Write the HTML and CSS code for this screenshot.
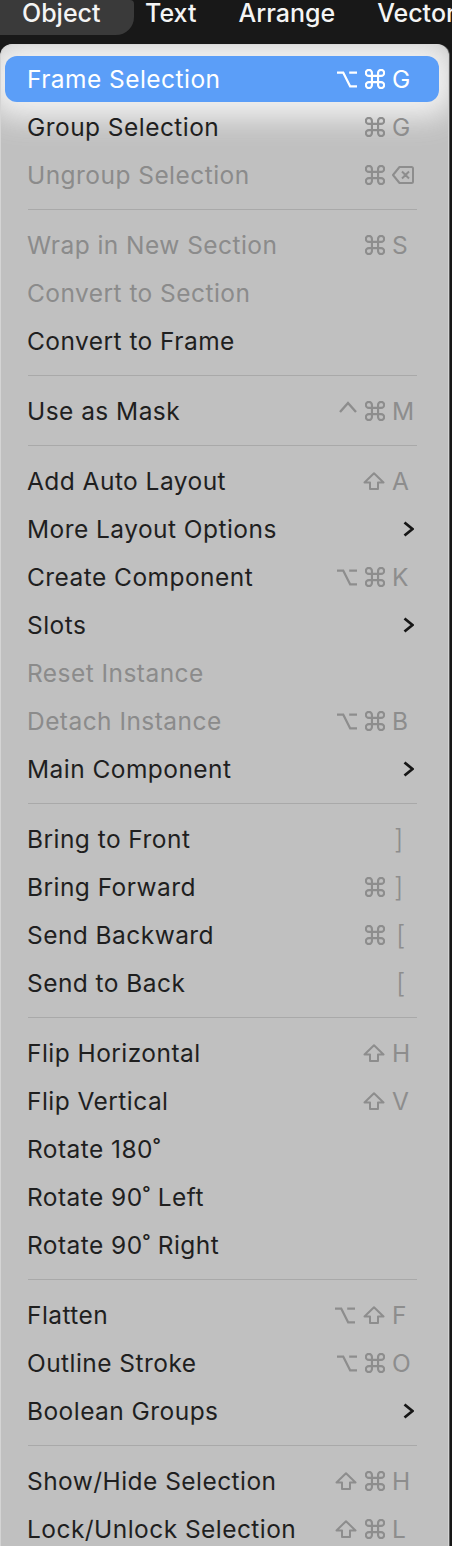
FILE: index.html
```html
<!DOCTYPE html>
<html>
<head>
<meta charset="utf-8">
<link rel="stylesheet" href="styles.css">
</head>
<body>
<svg width="0" height="0" class="defs">
  <defs>
    <symbol id="cmd" viewBox="2.2 2.2 19.6 19.6"><path d="M15 6v12a3 3 0 1 0 3-3H6a3 3 0 1 0 3 3V6a3 3 0 1 0-3 3h12a3 3 0 1 0-3-3"/></symbol>
    <symbol id="opt" viewBox="0 0 20 17"><path d="M0 1.6h6.2l7 13.8H20M12.2 1.6H20"/></symbol>
    <symbol id="shift" viewBox="0 0 22 18"><path d="M7 17v-6.5H1.5L11 1.2l9.5 9.3H15V17z"/></symbol>
    <symbol id="ctrl" viewBox="0 0 18 12"><path d="M1 11L9 2l8 9"/></symbol>
    <symbol id="del" viewBox="0 0 22 18"><path d="M19.5 1H7.5L1 9l6.5 8h12a1.5 1.5 0 0 0 1.5-1.5v-13A1.5 1.5 0 0 0 19.5 1zM10 5.5l7 7M17 5.5l-7 7"/></symbol>
    <symbol id="chev" viewBox="0 0 11 16"><path d="M1.5 1.5l8 6.5-8 6.5"/></symbol>
  </defs>
</svg>

<div class="topbar">
  <div class="tab active">Object</div>
  <div class="tab">Text</div>
  <div class="tab">Arrange</div>
  <div class="tab">Vector</div>
</div>

<div class="menu">
  <div class="row hl">
    <span class="label">Frame Selection</span>
    <span class="keys"><span class="mods"><svg class="i opt"><use href="#opt"/></svg><svg class="i cmd"><use href="#cmd"/></svg></span><span class="key">G</span></span>
  </div>
  <div class="row">
    <span class="label">Group Selection</span>
    <span class="keys"><span class="mods"><svg class="i cmd"><use href="#cmd"/></svg></span><span class="key">G</span></span>
  </div>
  <div class="row off">
    <span class="label">Ungroup Selection</span>
    <span class="keys"><span class="mods"><svg class="i cmd"><use href="#cmd"/></svg></span><span class="key"><svg class="i del"><use href="#del"/></svg></span></span>
  </div>
  <div class="sep"></div>
  <div class="row off">
    <span class="label">Wrap in New Section</span>
    <span class="keys"><span class="mods"><svg class="i cmd"><use href="#cmd"/></svg></span><span class="key">S</span></span>
  </div>
  <div class="row off">
    <span class="label">Convert to Section</span>
  </div>
  <div class="row">
    <span class="label">Convert to Frame</span>
  </div>
  <div class="sep"></div>
  <div class="row">
    <span class="label">Use as Mask</span>
    <span class="keys"><span class="mods"><svg class="i ctrl"><use href="#ctrl"/></svg><svg class="i cmd"><use href="#cmd"/></svg></span><span class="key">M</span></span>
  </div>
  <div class="sep"></div>
  <div class="row">
    <span class="label">Add Auto Layout</span>
    <span class="keys"><span class="mods"><svg class="i shift"><use href="#shift"/></svg></span><span class="key">A</span></span>
  </div>
  <div class="row">
    <span class="label">More Layout Options</span>
    <svg class="chev"><use href="#chev"/></svg>
  </div>
  <div class="row">
    <span class="label">Create Component</span>
    <span class="keys"><span class="mods"><svg class="i opt"><use href="#opt"/></svg><svg class="i cmd"><use href="#cmd"/></svg></span><span class="key">K</span></span>
  </div>
  <div class="row">
    <span class="label">Slots</span>
    <svg class="chev"><use href="#chev"/></svg>
  </div>
  <div class="row off">
    <span class="label">Reset Instance</span>
  </div>
  <div class="row off">
    <span class="label">Detach Instance</span>
    <span class="keys"><span class="mods"><svg class="i opt"><use href="#opt"/></svg><svg class="i cmd"><use href="#cmd"/></svg></span><span class="key">B</span></span>
  </div>
  <div class="row">
    <span class="label">Main Component</span>
    <svg class="chev"><use href="#chev"/></svg>
  </div>
  <div class="sep"></div>
  <div class="row">
    <span class="label">Bring to Front</span>
    <span class="keys"><span class="mods"></span><span class="key br">]</span></span>
  </div>
  <div class="row">
    <span class="label">Bring Forward</span>
    <span class="keys"><span class="mods"><svg class="i cmd"><use href="#cmd"/></svg></span><span class="key br">]</span></span>
  </div>
  <div class="row">
    <span class="label">Send Backward</span>
    <span class="keys"><span class="mods"><svg class="i cmd"><use href="#cmd"/></svg></span><span class="key br bl">[</span></span>
  </div>
  <div class="row">
    <span class="label">Send to Back</span>
    <span class="keys"><span class="mods"></span><span class="key br bl">[</span></span>
  </div>
  <div class="sep"></div>
  <div class="row">
    <span class="label">Flip Horizontal</span>
    <span class="keys"><span class="mods"><svg class="i shift"><use href="#shift"/></svg></span><span class="key">H</span></span>
  </div>
  <div class="row">
    <span class="label">Flip Vertical</span>
    <span class="keys"><span class="mods"><svg class="i shift"><use href="#shift"/></svg></span><span class="key">V</span></span>
  </div>
  <div class="row">
    <span class="label">Rotate 180˚</span>
  </div>
  <div class="row">
    <span class="label">Rotate 90˚ Left</span>
  </div>
  <div class="row">
    <span class="label">Rotate 90˚ Right</span>
  </div>
  <div class="sep"></div>
  <div class="row">
    <span class="label">Flatten</span>
    <span class="keys"><span class="mods"><svg class="i opt"><use href="#opt"/></svg><svg class="i shift"><use href="#shift"/></svg></span><span class="key">F</span></span>
  </div>
  <div class="row">
    <span class="label">Outline Stroke</span>
    <span class="keys"><span class="mods"><svg class="i opt"><use href="#opt"/></svg><svg class="i cmd"><use href="#cmd"/></svg></span><span class="key">O</span></span>
  </div>
  <div class="row">
    <span class="label">Boolean Groups</span>
    <svg class="chev"><use href="#chev"/></svg>
  </div>
  <div class="sep"></div>
  <div class="row">
    <span class="label">Show/Hide Selection</span>
    <span class="keys"><span class="mods"><svg class="i shift"><use href="#shift"/></svg><svg class="i cmd"><use href="#cmd"/></svg></span><span class="key">H</span></span>
  </div>
  <div class="row">
    <span class="label">Lock/Unlock Selection</span>
    <span class="keys"><span class="mods"><svg class="i shift"><use href="#shift"/></svg><svg class="i cmd"><use href="#cmd"/></svg></span><span class="key">L</span></span>
  </div>
</div>
</body>
</html>
```

FILE: styles.css
```css
* { box-sizing: border-box; }

html, body {
  margin: 0;
  padding: 0;
  background: #171717;
  overflow: hidden;
}

body {
  width: 452px;
  height: 1546px;
  font-family: Inter, "Noto Sans", "Liberation Sans", sans-serif;
}

.defs { position: absolute; width: 0; height: 0; }

.topbar {
  height: 44px;
  display: flex;
  align-items: flex-start;
  background: #181818;
  white-space: nowrap;
  overflow: hidden;
}

.tab {
  height: 35px;
  padding: 1px 21px 0;
  line-height: 25px;
  color: #f4f4f4;
  font-size: 25px;
  font-weight: 500;
}

.tab.active {
  background: #3a3a3a;
  border-radius: 0 4px 18px 0;
  margin-left: -12px;
  padding-left: 34px;
  padding-right: 33.5px;
  margin-right: -10px;
}

.menu {
  width: 449px;
  height: 1502px;
  background: #c0c0c0;
  border-radius: 12px 12px 0 0;
  border-top: 1px solid #d9d9d9;
  border-left: 1px solid #d4d4d4;
  border-right: 1px solid #d4d4d4;
  box-shadow: 1px 0 0 #5a5a5a;
  padding-top: 10px;
  position: relative;
  overflow: hidden;
}

.row {
  height: 48px;
  display: flex;
  align-items: center;
  margin: 0 9px 0 4px;
  padding: 0 24px 0 22px;
  color: #1f1f1f;
  font-size: 24.5px;
  letter-spacing: 0.45px;
  position: relative;
}

.row.off { color: #8b8b8b; }

.row.hl {
  height: 46px;
  margin-top: 1px;
  margin-bottom: 1px;
  background: #5b9ef8;
  border-radius: 12px;
  color: #ffffff;
  box-shadow: 0 0 28px 16px rgba(246, 246, 246, 0.9);
}

.label { flex: 1; white-space: nowrap; }

.keys {
  display: flex;
  align-items: center;
  color: #8d8d8d;
  letter-spacing: 0;
}

.row.hl .keys { color: #ffffff; }

.mods {
  display: flex;
  align-items: center;
  gap: 8px;
  margin-right: 7px;
}

.key {
  width: 23px;
  font-size: 24.5px;
  display: flex;
  align-items: center;
}

.key.br { padding-left: 2px; font-size: 27px; font-weight: 300; }
.key.bl { padding-left: 4px; }

.i {
  fill: none;
  stroke: currentColor;
  stroke-width: 2;
  stroke-linecap: butt;
  stroke-linejoin: miter;
  overflow: visible;
}

.i.cmd { width: 20px; height: 20px; stroke-width: 2.1; }
.i.opt { width: 20px; height: 17px; stroke-width: 2.3; }
.i.shift { width: 22px; height: 18px; stroke-width: 2; stroke-linejoin: round; }
.i.ctrl { width: 18px; height: 12px; stroke-width: 2.4; margin-bottom: 9px; }
.i.del { width: 22px; height: 18px; stroke-width: 2; stroke-linejoin: round; }

.chev {
  width: 11px;
  height: 16px;
  fill: none;
  stroke: #161616;
  stroke-width: 2.8;
  margin-right: 1px;
}

.sep {
  height: 22px;
  margin: 0 31px 0 27px;
  padding-top: 10px;
}

.sep::before {
  content: "";
  display: block;
  height: 1px;
  background: #a9a9a9;
}
```
